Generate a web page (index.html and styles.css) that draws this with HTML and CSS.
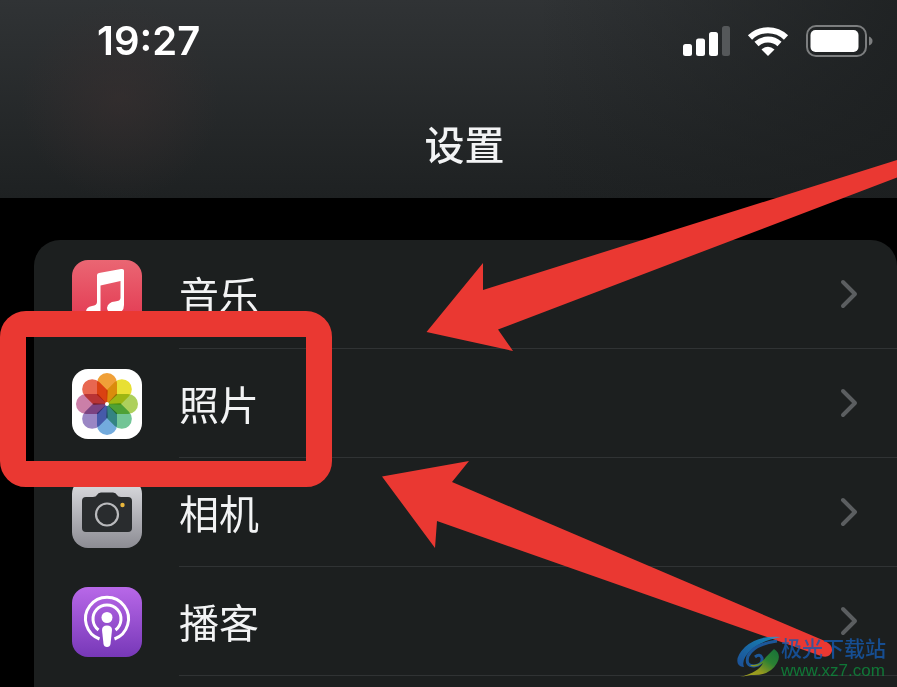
FILE: index.html
```
<!DOCTYPE html>
<html lang="zh-CN">
<head>
    <title>设置</title>
    <meta charset="UTF-8">
    <meta name="viewport" content="width=device-width, initial-scale=1.0">
    <link rel="stylesheet" href="styles.css">
</head>
<body>
    <header class="header">
        <div class="status-bar">
            <span class="time">19:27</span>
            <div class="status-icons">
                <svg width="47" height="32" viewBox="0 0 47 32" fill="#fff">
                    <rect x="0" y="19" width="9" height="12" rx="2.5"/>
                    <rect x="13" y="13.500" width="9" height="17.500" rx="2.500"/>
                    <rect x="26" y="7" width="9" height="24" rx="2.500"/>
                    <rect x="39" y="1" width="8" height="30" rx="2.500" fill="#55585a"/>
                </svg>
                <svg width="42" height="32" viewBox="0 0 42 32">
                    <path d="M3 12.500 A26 26 0 0 1 39 12.500 M9.500 19 A17 17 0 0 1 32.500 19" fill="none" stroke="#fff" stroke-width="6"/>
                    <path d="M14.500 24.500 Q21 19 27.500 24.500 L21 31 Z" fill="#fff"/>
                </svg>
                <svg width="67" height="32" viewBox="0 0 67 32">
                    <rect x="1" y="1" width="59" height="30" rx="9" fill="none" stroke="#7c7e7f" stroke-width="2"/>
                    <rect x="4.500" y="5" width="48" height="22" rx="5" fill="#fff"/>
                    <path d="M63 11.500 Q66.500 13 66.500 16 T63 20.500 Z" fill="#7c7e7f"/>
                </svg>
            </div>
        </div>
        <h1 class="title">设置</h1>
    </header>

    <main class="list">
        <a class="row" href="#">
            <svg class="app-icon" viewBox="0 0 70 70">
                <defs>
                    <linearGradient id="music" x1="0" y1="0" x2="0" y2="1">
                        <stop offset="0" stop-color="#ea6673"/>
                        <stop offset="1" stop-color="#e2344e"/>
                    </linearGradient>
                </defs>
                <rect width="70" height="70" rx="16" fill="url(#music)"/>
                <path d="M25 15 Q25 13.500 27 13 L49 9 Q52 8.500 52 10.500 V45 Q52 53 43 54 Q35 53 35 48 Q36 42 43 41.500 Q48.500 41 48.500 38 V21 L28.500 25.500 V51 Q28 58 20 58 Q14 58 14 52 Q14 47 20 46 Q25 45.500 25 42 Z" fill="#fff"/>
            </svg>
            <span class="row-body">
                <span class="label">音乐</span>
                <svg class="chevron" viewBox="0 0 18 30"><path d="M3 3 L15 15 L3 27"/></svg>
            </span>
        </a>
        <a class="row" href="#">
            <svg class="app-icon" viewBox="0 0 70 70">
                <defs>
                    <path id="petal" d="M35 35 L25 26 V14 A10 10 0 0 1 45 14 V26 Z"/>
                </defs>
                <rect width="70" height="70" rx="16" fill="#fff"/>
                <g class="petals">
                    <use href="#petal" fill="#f0a038"/>
                    <use href="#petal" fill="#e8e034" transform="rotate(45 35 35)"/>
                    <use href="#petal" fill="#add05c" transform="rotate(90 35 35)"/>
                    <use href="#petal" fill="#72c596" transform="rotate(135 35 35)"/>
                    <use href="#petal" fill="#73abdd" transform="rotate(180 35 35)"/>
                    <use href="#petal" fill="#9a86c4" transform="rotate(225 35 35)"/>
                    <use href="#petal" fill="#cb7fa8" transform="rotate(270 35 35)"/>
                    <use href="#petal" fill="#e86750" transform="rotate(315 35 35)"/>
                </g>
                <circle cx="35" cy="35" r="2" fill="#fff"/>
            </svg>
            <span class="row-body">
                <span class="label">照片</span>
                <svg class="chevron" viewBox="0 0 18 30"><path d="M3 3 L15 15 L3 27"/></svg>
            </span>
        </a>
        <a class="row" href="#">
            <svg class="app-icon" viewBox="0 0 70 70">
                <defs>
                    <linearGradient id="camera" x1="0" y1="0" x2="0" y2="1">
                        <stop offset="0" stop-color="#dedfe3"/>
                        <stop offset="1" stop-color="#8c8c93"/>
                    </linearGradient>
                </defs>
                <rect width="70" height="70" rx="16" fill="url(#camera)"/>
                <path d="M14 19 H21 Q24 19 25 17 Q26 14.500 29 14.500 H41 Q44 14.500 45 17 Q46 19 49 19 H56 Q60 19 60 23 V50 Q60 54 56 54 H14 Q10 54 10 50 V23 Q10 19 14 19 Z" fill="#292c2e"/>
                <circle cx="35" cy="36.500" r="11" fill="none" stroke="#b9babd" stroke-width="2.200"/>
                <circle cx="50.500" cy="27" r="2.200" fill="#e9b73c"/>
            </svg>
            <span class="row-body">
                <span class="label">相机</span>
                <svg class="chevron" viewBox="0 0 18 30"><path d="M3 3 L15 15 L3 27"/></svg>
            </span>
        </a>
        <a class="row" href="#">
            <svg class="app-icon" viewBox="0 0 70 70">
                <defs>
                    <linearGradient id="podcast" x1="0" y1="0" x2="0" y2="1">
                        <stop offset="0" stop-color="#b868e8"/>
                        <stop offset="1" stop-color="#7738b8"/>
                    </linearGradient>
                </defs>
                <rect width="70" height="70" rx="16" fill="url(#podcast)"/>
                <path d="M27.500 52 A21.500 21.500 0 1 1 42.500 52" fill="none" stroke="#fff" stroke-width="3"/>
                <path d="M26.500 43 A14 14 0 1 1 43.500 43" fill="none" stroke="#fff" stroke-width="3"/>
                <circle cx="35" cy="30.500" r="5.500" fill="#fff"/>
                <path d="M30 43 Q30 38.500 35 38.500 T40 43 L38.500 57 Q38 60 35 60 T31.500 57 Z" fill="#fff"/>
            </svg>
            <span class="row-body">
                <span class="label">播客</span>
                <svg class="chevron" viewBox="0 0 18 30"><path d="M3 3 L15 15 L3 27"/></svg>
            </span>
        </a>
    </main>

    <!-- highlight box and arrows over the photos row -->
    <div class="highlight"></div>
    <svg class="arrows" width="897" height="687" viewBox="0 0 897 687">
        <path d="M426.500 332 L483 263 V290 L897 160 V177.500 L498 329.500 L513 351 Z"/>
        <path d="M382 476.500 L469 461 L452 482 L825 641 Q833 645 832 651 Q830 658.500 821 656 L437 521 L435 548 Z"/>
    </svg>

    <div class="watermark">
        <svg width="45" height="42" viewBox="0 0 45 42">
            <defs>
                <linearGradient id="swirl" x1="0" y1="1" x2="1" y2="0">
                    <stop offset="0" stop-color="#c8c81c"/>
                    <stop offset="0.350" stop-color="#b3b820"/>
                    <stop offset="0.650" stop-color="#2f9a38"/>
                    <stop offset="1" stop-color="#168440"/>
                </linearGradient>
                <linearGradient id="wave" x1="0" y1="1" x2="1" y2="0">
                    <stop offset="0" stop-color="#1c5cb4"/>
                    <stop offset="1" stop-color="#16a0dc"/>
                </linearGradient>
            </defs>
            <path d="M45 1 Q22 -1 9 11 Q-1 21 2 28 Q4 31 8 31 Q5 24 14 15 Q24 5 45 1 Z" fill="url(#wave)"/>
            <path d="M41 5 Q18 8 12 20 Q9 30 18 30 Q27 29 26 22 Q24 17 19 21" fill="none" stroke="#1c66b8" stroke-width="3"/>
            <path d="M38 13 Q46 18 41 27 Q34 40 15 39 L4 41 Q23 36 27 27 Q18 33 14 29 Q24 30 30 21 Q34 17 38 13 Z" fill="url(#swirl)"/>
        </svg>
        <div class="watermark-text">
            <span class="site-name">极光下载站</span>
            <span class="site-url">www.xz7.com</span>
        </div>
    </div>
</body>
</html>
```
FILE: styles.css
```
* {
    box-sizing: border-box;
}
body {
    margin: 0;
    min-height: 100vh;
    position: relative;
    display: flex;
    flex-direction: column;
    background-color: #000;
    color: #f2f3f4;
    font-family: "Noto Sans CJK SC", sans-serif;
}
.header {
    padding: 17px 24px 23px 97px;
    background: radial-gradient(circle at 120px 100px, rgba(60, 48, 48, 0.5), rgba(60, 48, 48, 0) 100px),
        linear-gradient(90deg, rgba(28, 31, 32, 0) 60%, rgba(28, 31, 32, 0.8)),
        linear-gradient(#303335, #1e2122);
}
.status-bar {
    display: flex;
    justify-content: space-between;
    align-items: center;
    height: 48px;
}
.time {
    font-family: Inter, sans-serif;
    font-size: 40px;
    font-weight: 600;
    line-height: 48px;
    color: #fff;
}
.status-icons {
    display: flex;
    gap: 17px;
}
.title {
    margin: 46px 0 0 -41px;
    text-align: center;
    font-size: 40px;
    font-weight: 500;
    line-height: 64px;
}
.list {
    flex: 1;
    margin: 42px 0 0 34px;
    border-radius: 26px 26px 0 0;
    background-color: #1c1f1f;
}
.row {
    display: flex;
    align-items: center;
    gap: 37px;
    height: 109px;
    padding-left: 38px;
    color: inherit;
    text-decoration: none;
}
.app-icon {
    width: 70px;
    height: 70px;
    flex-shrink: 0;
}
.row-body {
    display: flex;
    flex: 1;
    justify-content: space-between;
    align-items: center;
    height: 109px;
    padding-right: 39px;
    border-bottom: 1px solid #303334;
}
.label {
    font-size: 40px;
    font-weight: 400;
    line-height: 60px;
}
.chevron {
    width: 18px;
    height: 30px;
    fill: none;
    stroke: #5b5e60;
    stroke-width: 4;
    stroke-linecap: round;
    stroke-linejoin: round;
}
.petals {
    isolation: isolate;
}
.petals use {
    mix-blend-mode: multiply;
}
.highlight {
    position: absolute;
    top: 311px;
    left: 0;
    width: 332px;
    height: 176px;
    border: 26px solid #ea3832;
    border-radius: 26px;
}
.arrows {
    position: absolute;
    top: 0;
    left: 0;
    fill: #ea3832;
}
.watermark {
    position: absolute;
    right: 11px;
    bottom: 7px;
    display: flex;
    align-items: center;
    opacity: 0.8;
}
.watermark-text {
    display: flex;
    flex-direction: column;
    gap: 2px;
}
.site-name {
    font-size: 21px;
    font-weight: 500;
    line-height: 26px;
    color: #155aaf;
}
.site-url {
    font-family: "Liberation Sans", Arial, sans-serif;
    font-size: 17px;
    line-height: 18px;
    color: #0d8c3c;
}
```
